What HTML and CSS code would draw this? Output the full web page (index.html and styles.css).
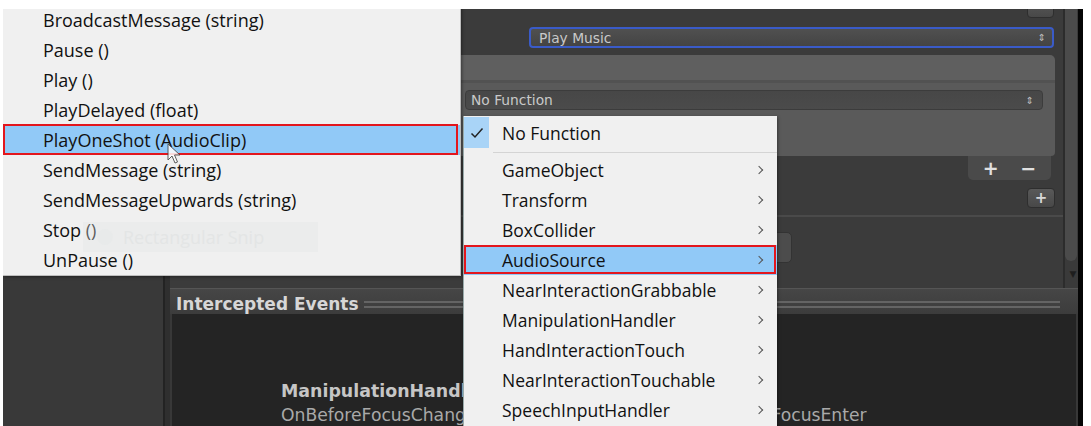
FILE: index.html
```html
<!DOCTYPE html>
<html>
<head>
<meta charset="utf-8">
<link rel="stylesheet" href="styles.css">
</head>
<body>
<div class="screen">
  <div class="leftpane"></div>
  <div class="divider"></div>
  <div class="main">
    <div class="inspector">
      <div class="insp-content">
        <div class="row row-top"><div class="smallbtn topbtn"></div></div>
        <div class="row row-music"><div class="dropdown blue"><span>Play Music</span><span class="updown">&#8661;</span></div></div>
        <div class="eventpanel">
          <div class="ep-header"></div>
          <div class="ep-body">
            <div class="dropdown func"><span>No Function</span><span class="updown">&#8661;</span></div>
          </div>
        </div>
        <div class="row row-footer"><div class="ep-footer"><span>+</span><span>&minus;</span></div></div>
        <div class="row row-plus"><div class="smallbtn plusbtn">+</div></div>
        <div class="sep"></div>
        <div class="row row-big"><div class="bigbtn"></div></div>
      </div>
      <div class="scrollbar"><div class="thumb"></div><div class="arrow">&#9660;</div></div>
    </div>
    <div class="events">
      <div class="ev-header"><span class="ev-title-h">Intercepted Events</span><div class="lines"></div></div>
      <div class="ev-body">
        <div class="ev-title">ManipulationHandler</div>
        <div class="ev-line"><span class="c1">OnBeforeFocusChange</span><span class="c2">OnFocusEnter</span></div>
      </div>
    </div>
  </div>
  <div class="blackstrip"></div>

  <div class="menu menu-left">
    <div class="item">BroadcastMessage (string)</div>
    <div class="item">Pause ()</div>
    <div class="item">Play ()</div>
    <div class="item">PlayDelayed (float)</div>
    <div class="item hl">PlayOneShot (AudioClip)</div>
    <div class="item">SendMessage (string)</div>
    <div class="item">SendMessageUpwards (string)</div>
    <div class="item">Stop ()</div>
    <div class="item">UnPause ()</div>
    <div class="snip"><span class="snip-icon"></span><span>Rectangular Snip</span></div>
  </div>

  <div class="menu menu-right">
    <div class="item first"><span class="check"><svg width="14" height="12" viewBox="0 0 14 12"><path d="M1.5 6.5 L5 10 L12.5 1.5" fill="none" stroke="#222" stroke-width="1.5"/></svg></span>No Function</div>
    <div class="msep"></div>
    <div class="item sub">GameObject<span class="chev"></span></div>
    <div class="item sub">Transform<span class="chev"></span></div>
    <div class="item sub">BoxCollider<span class="chev"></span></div>
    <div class="item sub hl">AudioSource<span class="chev"></span></div>
    <div class="item sub">NearInteractionGrabbable<span class="chev"></span></div>
    <div class="item sub">ManipulationHandler<span class="chev"></span></div>
    <div class="item sub">HandInteractionTouch<span class="chev"></span></div>
    <div class="item sub">NearInteractionTouchable<span class="chev"></span></div>
    <div class="item sub">SpeechInputHandler<span class="chev"></span></div>
  </div>

  <svg class="cursor" width="14" height="22" viewBox="0 0 14 22"><path d="M1 1 L1 17 L5 13 L8 20 L10.5 19 L7.5 12 L13 12 Z" fill="#fff" stroke="#444" stroke-width="1" stroke-linejoin="round" opacity="0.85"/></svg>
</div>
</body>
</html>
```

FILE: styles.css
```css
* { box-sizing: border-box; margin: 0; padding: 0; }
html, body { background: #fff; }
body { width: 1091px; height: 426px; overflow: hidden; }

.screen {
  position: relative;
  margin: 9px 0 0 3px;
  width: 1080px;
  height: 417px;
  overflow: hidden;
  display: grid;
  grid-template-columns: 160px 7px 908px 5px;
  background: #383838;
  font-family: "DejaVu Sans", sans-serif;
}
.leftpane { background: #393939; }
.divider { background: #2f2f2f; border-left: 2px solid #232323; }
.blackstrip { background: #060606; }
.main { display: grid; grid-template-rows: 279px 138px; }

.inspector { display: grid; grid-template-columns: 893px 15px; background: #3b3b3b; }
.insp-content { display: flex; flex-direction: column; }
.row { display: flex; }
.row-top { height: 9px; }
.smallbtn {
  background: linear-gradient(#595959, #484848);
  border: 1px solid #2e2e2e;
  border-radius: 4px;
  color: #d8d8d8;
  display: flex; align-items: center; justify-content: center;
}
.topbtn { margin-left: 857px; width: 27px; height: 20px; margin-top: -11px; }
.row-music { margin-top: 9px; height: 21px; }
.dropdown {
  display: flex; align-items: center; justify-content: space-between;
  font-size: 13.8px; color: #c9c9c9;
  background: linear-gradient(#505050, #444);
  border-radius: 4px;
}
.blue { margin-left: 359px; width: 525px; height: 21px; border: 2px solid #3a5bc8; padding: 0 6px 0 8px; }
.updown { font-size: 10px; color: #bbb; }
.eventpanel { margin: 7px 0 0 10px; width: 875px; height: 101px; display: flex; flex-direction: column; }
.ep-header { height: 28px; background: #5f5f5f; border-radius: 5px 5px 0 0; border-bottom: 3px solid #525252; }
.ep-body { flex: 1; background: #5a5a5a; padding-top: 7px; border-radius: 0 0 4px 4px; }
.func { margin-left: 285px; width: 578px; height: 20px; background: linear-gradient(#474747, #4b4b4b); border: 1px solid #3c3c3c; padding: 0 8px 0 5px; }
.row-footer { height: 24px; }
.ep-footer {
  margin-left: 798px; width: 83px; height: 24px;
  background: #4a4a4a; border-radius: 0 0 5px 5px;
  display: flex; justify-content: space-around; align-items: center;
  color: #e0e0e0; font-size: 19px; font-weight: bold; padding: 0 4px;
}
.row-plus { margin-top: 8px; height: 19px; }
.plusbtn { margin-left: 857px; width: 28px; height: 20px; font-size: 15px; font-weight: bold; }
.sep { margin-top: 8px; height: 2px; background: #4a4a4a; }
.row-big { margin-top: 15px; }
.bigbtn { margin-left: 300px; width: 322px; height: 31px; background: #4c4c4c; border: 1px solid #333; border-radius: 5px; }

.scrollbar { background: #3a3a3a; border-left: 2px solid #2c2c2c; position: relative; display: flex; flex-direction: column; }
.thumb { height: 252px; background: #4b4b4b; border-radius: 0 0 6px 6px; margin: 0 1px 0 0; }
.arrow { font-size: 9px; color: #1e1e1e; text-align: center; margin-top: 8px; padding-left: 3px; }

.events { display: flex; flex-direction: column; background: #383838; }
.ev-header {
  height: 27px; display: flex; align-items: center;
  background: linear-gradient(#464646, #3c3c3c);
  border-top: 1px solid #555;
  padding: 5px 0 0 6px;
}
.ev-title-h { font-weight: bold; font-size: 17px; color: #d6d6d6; }
.lines { flex: 1; height: 7px; border-top: 2px solid #646464; border-bottom: 2px solid #646464; margin: 0 18px 0 5px; }
.ev-body { flex: 1; background: #242424; margin-left: 2px; margin-right: 2px; padding: 66px 0 0 109px; }
.ev-title { font-weight: bold; font-size: 17.4px; color: #c6c6c6; line-height: 22px; white-space: nowrap; }
.ev-line { font-size: 17.2px; color: #a9a9a9; line-height: 26px; display: flex; white-space: nowrap; }
.ev-line .c1 { width: 466px; flex: none; }

/* menus */
.menu {
  position: absolute;
  background: #f0f0f0;
  font-family: "Open Sans", "Noto Sans", sans-serif;
  font-size: 18px;
  color: #111;
  box-shadow: 1px 1px 3px rgba(0,0,0,0.4);
}
.menu .item { height: 30px; line-height: 30px; position: relative; white-space: nowrap; }
.menu-left { left: 0; top: -4px; width: 458px; border-right: 1px solid #bdbdbd; border-bottom: 1px solid #bdbdbd; }
.menu-left .item { padding-left: 40px; }
.menu .hl { background: #91c9f7; }
.menu .hl::after { content: ""; position: absolute; inset: 0 1px 0 0; border: 2px solid #e3161d; }
.menu-left .hl::after { inset: -1px 2px 0 0; }

.snip {
  position: absolute; left: 80px; top: 217px; width: 235px; height: 30px;
  background: rgba(225, 228, 228, 0.35);
  display: flex; align-items: center; gap: 10px; padding-left: 14px;
  color: #e3e5e5; font-size: 18px;
}
.snip-icon { width: 16px; height: 16px; border-radius: 50%; background: #e8eaea; }

.menu-right { left: 460px; top: 107px; width: 314px; height: 330px; border-left: 1px solid #9aa; font-size: 17.5px; }
.menu-right .first { height: 34px; line-height: 34px; padding-left: 38px; position: relative; }
.check {
  position: absolute; left: 0; top: 1px; width: 25px; height: 31px;
  background: #a9d4f7; display: flex; align-items: center; justify-content: center;
}
.msep { height: 1px; background: #d4d4d4; margin: 2px 0 2px 29px; }
.menu-right .sub { padding-left: 38px; }
.chev {
  position: absolute; right: 15px; top: 12px; width: 6px; height: 6px;
  border-top: 1.3px solid #555; border-right: 1.3px solid #555;
  transform: rotate(45deg);
}
.menu-right .hl::after { inset: 0 1px 1px 0; }

.cursor { position: absolute; left: 164px; top: 134px; }
```
